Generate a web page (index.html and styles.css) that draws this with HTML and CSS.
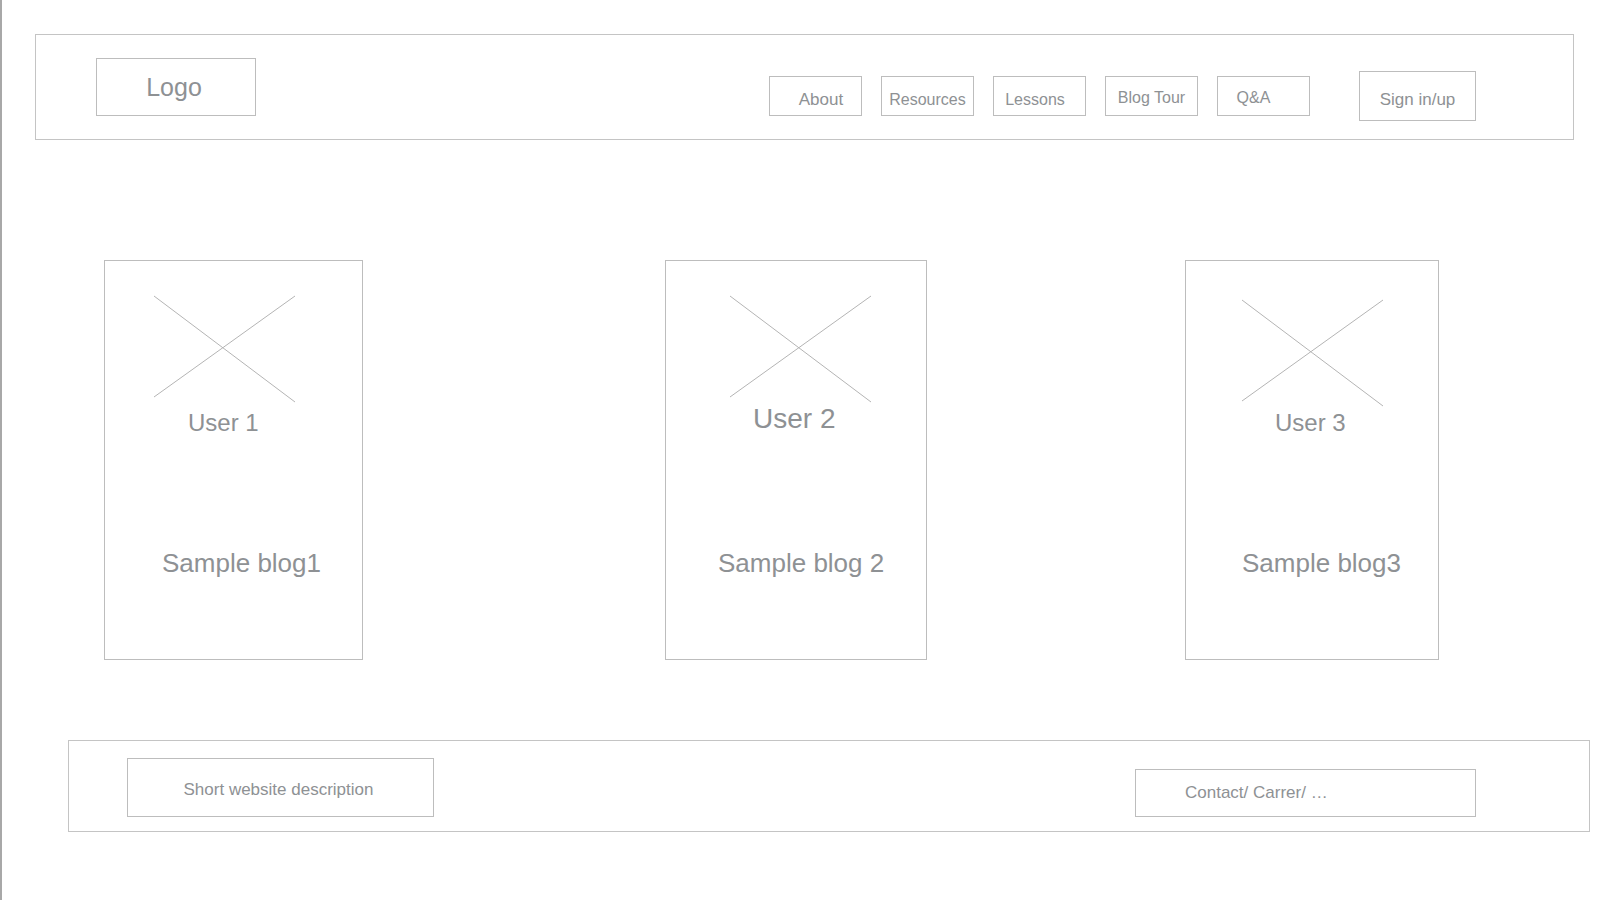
FILE: index.html
```html
<!DOCTYPE html>
<html lang="en">
<head>
  <meta charset="UTF-8">
  <title>Blog wireframe</title>
  <link rel="stylesheet" href="styles.css">
</head>
<body>
  <div class="page">

    <!-- top bar -->
    <header class="topbar">
      <div class="logo">Logo</div>
      <nav class="nav">
        <a class="nav-item nav-item--about">About</a>
        <a class="nav-item">Resources</a>
        <a class="nav-item nav-item--lessons">Lessons</a>
        <a class="nav-item nav-item--raised">Blog Tour</a>
        <a class="nav-item nav-item--raised nav-item--qa">Q&amp;A</a>
      </nav>
      <a class="sign-in">Sign in/up</a>
    </header>

    <!-- sample blogs -->
    <main class="cards">
      <div class="card card--one">
        <div class="card-head">
          <svg class="card-img" viewBox="0 0 141 106" width="141" height="106">
            <line x1="0" y1="0" x2="141" y2="106" />
            <line x1="0" y1="101" x2="141" y2="0" />
          </svg>
          <div class="card-user">User 1</div>
        </div>
        <div class="card-blog">Sample blog1</div>
      </div>

      <div class="card card--two">
        <div class="card-head">
          <svg class="card-img" viewBox="0 0 141 106" width="141" height="106">
            <line x1="0" y1="0" x2="141" y2="106" />
            <line x1="0" y1="101" x2="141" y2="0" />
          </svg>
          <div class="card-user">User 2</div>
        </div>
        <div class="card-blog">Sample blog 2</div>
      </div>

      <div class="card card--three">
        <div class="card-head">
          <svg class="card-img" viewBox="0 0 141 106" width="141" height="106">
            <line x1="0" y1="0" x2="141" y2="106" />
            <line x1="0" y1="101" x2="141" y2="0" />
          </svg>
          <div class="card-user">User 3</div>
        </div>
        <div class="card-blog">Sample blog3</div>
      </div>
    </main>

    <!-- footer -->
    <footer class="footer">
      <div class="footer-desc">Short website description</div>
      <div class="footer-links">Contact/ Carrer/ …</div>
    </footer>

  </div>
</body>
</html>
```

FILE: styles.css
```css
body {
  margin: 0;
  background: #fff;
  font-family: 'Liberation Sans', Arial, sans-serif;
  color: #8e9194;
}

.page {
  border-left: 2px solid #a8a8a8;
  min-height: 900px;
  padding-top: 34px;
  box-sizing: border-box;
}

/* top bar */
.topbar {
  display: flex;
  align-items: flex-start;
  box-sizing: border-box;
  width: 1539px;
  height: 106px;
  margin-left: 33px;
  padding: 0 97px 0 60px;
  border: 1px solid #c4c4c4;
}

.logo {
  display: flex;
  align-items: center;
  justify-content: center;
  box-sizing: border-box;
  width: 160px;
  height: 58px;
  margin-top: 23px;
  padding-right: 4px;
  border: 1px solid #bdbdbd;
  font-size: 25px;
}

.nav {
  display: flex;
  gap: 19px;
  margin-left: auto;
  margin-top: 41px;
}

.nav-item {
  display: flex;
  align-items: center;
  justify-content: center;
  box-sizing: border-box;
  width: 93px;
  height: 40px;
  padding-top: 7px;
  border: 1px solid #bdbdbd;
  font-size: 16px;
}

.nav-item--about {
  font-size: 17px;
  padding-left: 11px;
}

.nav-item--lessons {
  padding-right: 9px;
}

.nav-item--raised {
  padding-top: 3px;
}

.nav-item--qa {
  padding-right: 20px;
}

.sign-in {
  display: flex;
  align-items: center;
  justify-content: center;
  box-sizing: border-box;
  width: 117px;
  height: 50px;
  margin-left: 49px;
  margin-top: 36px;
  padding-top: 8px;
  border: 1px solid #bdbdbd;
  font-size: 17px;
}

/* cards */
.cards {
  display: flex;
  margin-top: 120px;
  padding-left: 102px;
}

.card {
  box-sizing: border-box;
  height: 400px;
  border: 1px solid #bdbdbd;
}

.card--one {
  width: 259px;
  --img-top: 35px;
  --img-left: 49px;
  --user-gap: 9px;
  --user-left: 83px;
  --user-size: 24px;
  --blog-left: 57px;
  --blog-top: 89px;
}

.card--two {
  width: 262px;
  margin-left: 302px;
  --img-top: 35px;
  --img-left: 64px;
  --user-gap: 3px;
  --user-left: 87px;
  --user-size: 28px;
  --blog-left: 52px;
  --blog-top: 89px;
}

.card--three {
  width: 254px;
  margin-left: 258px;
  --img-top: 39px;
  --img-left: 56px;
  --user-gap: 5px;
  --user-left: 89px;
  --user-size: 24px;
  --blog-left: 56px;
  --blog-top: 89px;
}

.card-head {
  box-sizing: border-box;
  height: 200px;
  padding-top: var(--img-top);
}

.card-img {
  display: block;
  margin-left: var(--img-left);
  overflow: visible;
}

.card-img line {
  stroke: #b4b4b4;
  stroke-width: 1;
}

.card-user {
  margin-top: var(--user-gap);
  margin-left: var(--user-left);
  font-size: var(--user-size);
  line-height: 1;
}

.card-blog {
  margin-top: var(--blog-top);
  margin-left: var(--blog-left);
  font-size: 26px;
  line-height: 1;
}

/* footer */
.footer {
  display: flex;
  align-items: flex-start;
  box-sizing: border-box;
  width: 1522px;
  height: 92px;
  margin-top: 80px;
  margin-left: 66px;
  border: 1px solid #c4c4c4;
}

.footer-desc {
  display: flex;
  align-items: center;
  justify-content: center;
  box-sizing: border-box;
  width: 307px;
  height: 59px;
  margin-left: 58px;
  margin-top: 17px;
  padding-top: 5px;
  padding-right: 4px;
  border: 1px solid #bdbdbd;
  font-size: 17px;
}

.footer-links {
  display: flex;
  align-items: center;
  box-sizing: border-box;
  width: 341px;
  height: 48px;
  margin-left: auto;
  margin-right: 113px;
  margin-top: 28px;
  padding-left: 49px;
  border: 1px solid #bdbdbd;
  font-size: 17px;
}
```
